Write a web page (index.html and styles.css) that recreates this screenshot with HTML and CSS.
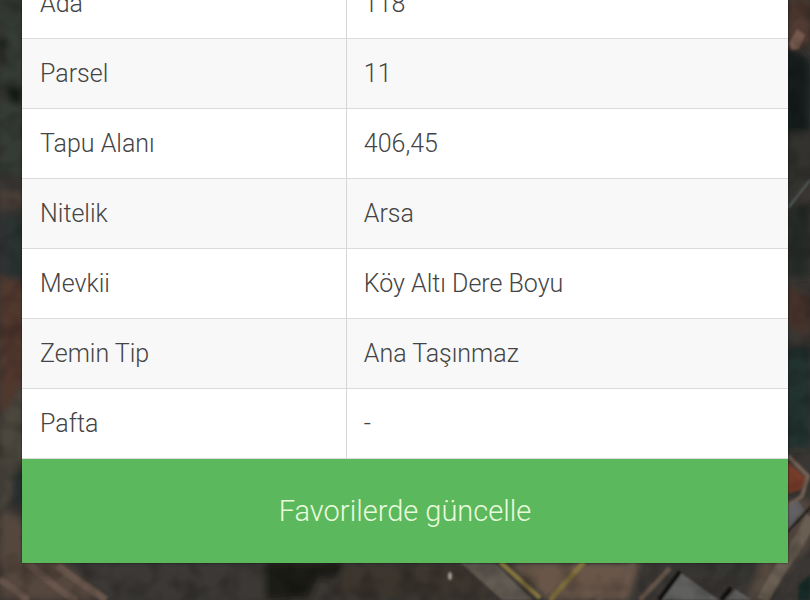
FILE: index.html
```html
<!DOCTYPE html>
<html lang="tr">
<head>
<meta charset="utf-8">
<meta name="viewport" content="width=device-width, initial-scale=1">
<title>Parsel Bilgisi</title>
<link rel="stylesheet" href="styles.css">
</head>
<body>
<svg class="map" viewBox="0 0 810 600" preserveAspectRatio="none" aria-hidden="true">
  <defs>
    <filter id="soft" x="-10%" y="-10%" width="120%" height="120%"><feGaussianBlur stdDeviation="3"/></filter>
    <filter id="edge" x="-10%" y="-10%" width="120%" height="120%"><feGaussianBlur stdDeviation="1"/></filter>
    <filter id="ground" x="0" y="0" width="100%" height="100%">
      <feTurbulence type="fractalNoise" baseFrequency="0.05" numOctaves="2" seed="8"/>
      <feColorMatrix values="0 0 0 0 0  0 0 0 0 0  0 0 0 0 0  2.6 0 0 0 -1.1"/>
    </filter>
  </defs>
  <rect width="810" height="600" fill="#393633"/>
  <g filter="url(#soft)">
    <path fill="#363a34" d="M0 0h30v175H0z"/>
    <path fill="#171c19" d="M0 33l6 8-2 22-4 2zM7 85l15 3v18L8 101z"/>
    <path fill="#4c4139" d="M0 188l23 6v12l-23 2z"/>
    <path fill="#293231" d="M0 215h30v63H0z"/>
    <path fill="#51382f" d="M0 275l30 12v83L0 418z"/>
    <path fill="#4b463c" d="M0 420l30-45v75L0 520z"/>
    <path fill="#252f2d" d="M12 478l12-16v40l-11 4z"/>
    <path fill="#55463e" d="M0 510l25 10 80 80H0z"/>
    <path fill="#3b3936" d="M60 563h208v37H113z"/>
    <path fill="#1b1a18" d="M265 563h80l-9 16-18-2-9 20-44 3z"/>
    <path fill="#3a342e" d="M344 563h120l30 37H330z"/>
    <path fill="#695648" d="M510 563h130l-12 37h-80z"/>
    <path fill="#353431" d="M676 563h114l-15 37-28-20-45-6z"/>
    <path fill="#55483f" d="M782 500h28v45l-48 55h-15z"/>
    <path fill="#171a1a" d="M785 45l25 15v70l-25 5z"/>
    <path fill="#513a33" d="M788 0h22v45l-20 3z"/>
    <path fill="#33332e" d="M785 132h25v43l-25 30z"/>
    <path fill="#252c27" d="M785 205h25v72h-25z"/>
    <path fill="#44302c" d="M785 284l25 13v40l-25-12z"/>
    <path fill="#23302d" d="M785 348h25v100h-25z"/>
  </g>
  <g filter="url(#edge)">
    <path fill="none" stroke="#67554b" stroke-width="7" d="M0 579l28 21M27 563l37 30 12 7M57 566l49 34"/>
    <path fill="#625b52" d="M461 563h34l38 37h-31z"/>
    <path fill="none" stroke="#83733f" stroke-width="5" d="M500 562l40 36M584 562l-34 38"/>
    <path fill="none" stroke="#65554a" stroke-width="5" d="M634 563l-26 27-11 10M640 600l30-32"/>
    <path fill="#60605f" d="M681 573l38 27h-57z"/>
    <path fill="#5d5c5b" d="M735 589l17 11h-26z"/>
    <path fill="none" stroke="#111" stroke-width="4" d="M680 572l-21 28M731 588l-10 12"/>
    <path fill="none" stroke="#6b5e53" stroke-width="12" d="M812 517c-13 29-34 51-49 83"/>
    <path fill="#783e2c" d="M787 461l20 18-7 11-13 4z"/>
    <path fill="none" stroke="#746256" stroke-width="4" d="M788 456l20 20-6 20-14 10"/>
    <path fill="#626063" d="M787 507l11-7 6 10-17 20z"/>
    <path fill="none" stroke="#191919" stroke-width="2" d="M787 532l24-25"/>
    <path fill="#75594e" d="M789 44l8-15 8 6-6 14-7 1z"/>
    <path fill="none" stroke="#566263" stroke-width="2" d="M788 208l23-29"/>
    <path fill="#172b25" d="M799 585l11-10v25h-12z"/>
    <ellipse cx="450" cy="576" rx="2" ry="4" fill="#a69c92"/>
  </g>
  <rect width="810" height="600" filter="url(#ground)" opacity="0.2"/>
</svg>
<main class="screen">
  <section class="card">
    <table class="details">
      <tbody>
        <tr><th scope="row">Ada</th><td>118</td></tr>
        <tr><th scope="row">Parsel</th><td>11</td></tr>
        <tr><th scope="row">Tapu Alanı</th><td>406,45</td></tr>
        <tr><th scope="row">Nitelik</th><td>Arsa</td></tr>
        <tr><th scope="row">Mevkii</th><td>Köy Altı Dere Boyu</td></tr>
        <tr><th scope="row">Zemin Tip</th><td>Ana Taşınmaz</td></tr>
        <tr><th scope="row">Pafta</th><td>-</td></tr>
      </tbody>
    </table>
    <button class="update" type="button">Favorilerde güncelle</button>
  </section>
</main>
</body>
</html>
```
FILE: styles.css
```css
* {
  box-sizing: border-box;
}

body {
  margin: 0;
  font-family: Roboto, "Liberation Sans", sans-serif;
  font-weight: 300;
  background: #393633;
}

.map {
  position: absolute;
  inset: 0;
  width: 100%;
  height: 100%;
}

.screen {
  position: relative;
  display: flex;
  flex-direction: column;
  justify-content: flex-end;
  height: 100vh;
  padding: 0 22px 37px;
  overflow: hidden;
}

.card {
  background: #fff;
  box-shadow: 0 0 2px rgba(0, 0, 0, 0.6);
}

.details {
  width: 100%;
  table-layout: fixed;
  border-collapse: separate;
  border-spacing: 0;
  color: #444;
  font-size: 25px;
  line-height: 30px;
}

.details th,
.details td {
  height: 70px;
  padding: 0 17px;
  border-bottom: 1px solid #dcdcdc;
  font-weight: 300;
  text-align: left;
  vertical-align: middle;
}

.details th {
  width: 42.4%;
  padding-left: 18px;
  border-right: 1px solid #d6d6d6;
}

.details tr:nth-child(even) {
  background: #f8f8f8;
}

.update {
  display: block;
  width: 100%;
  padding: 34px 16px;
  border: 0;
  background: #5cb85c;
  color: #e9fbdc;
  font: inherit;
  font-size: 29px;
  line-height: 36px;
}
```
